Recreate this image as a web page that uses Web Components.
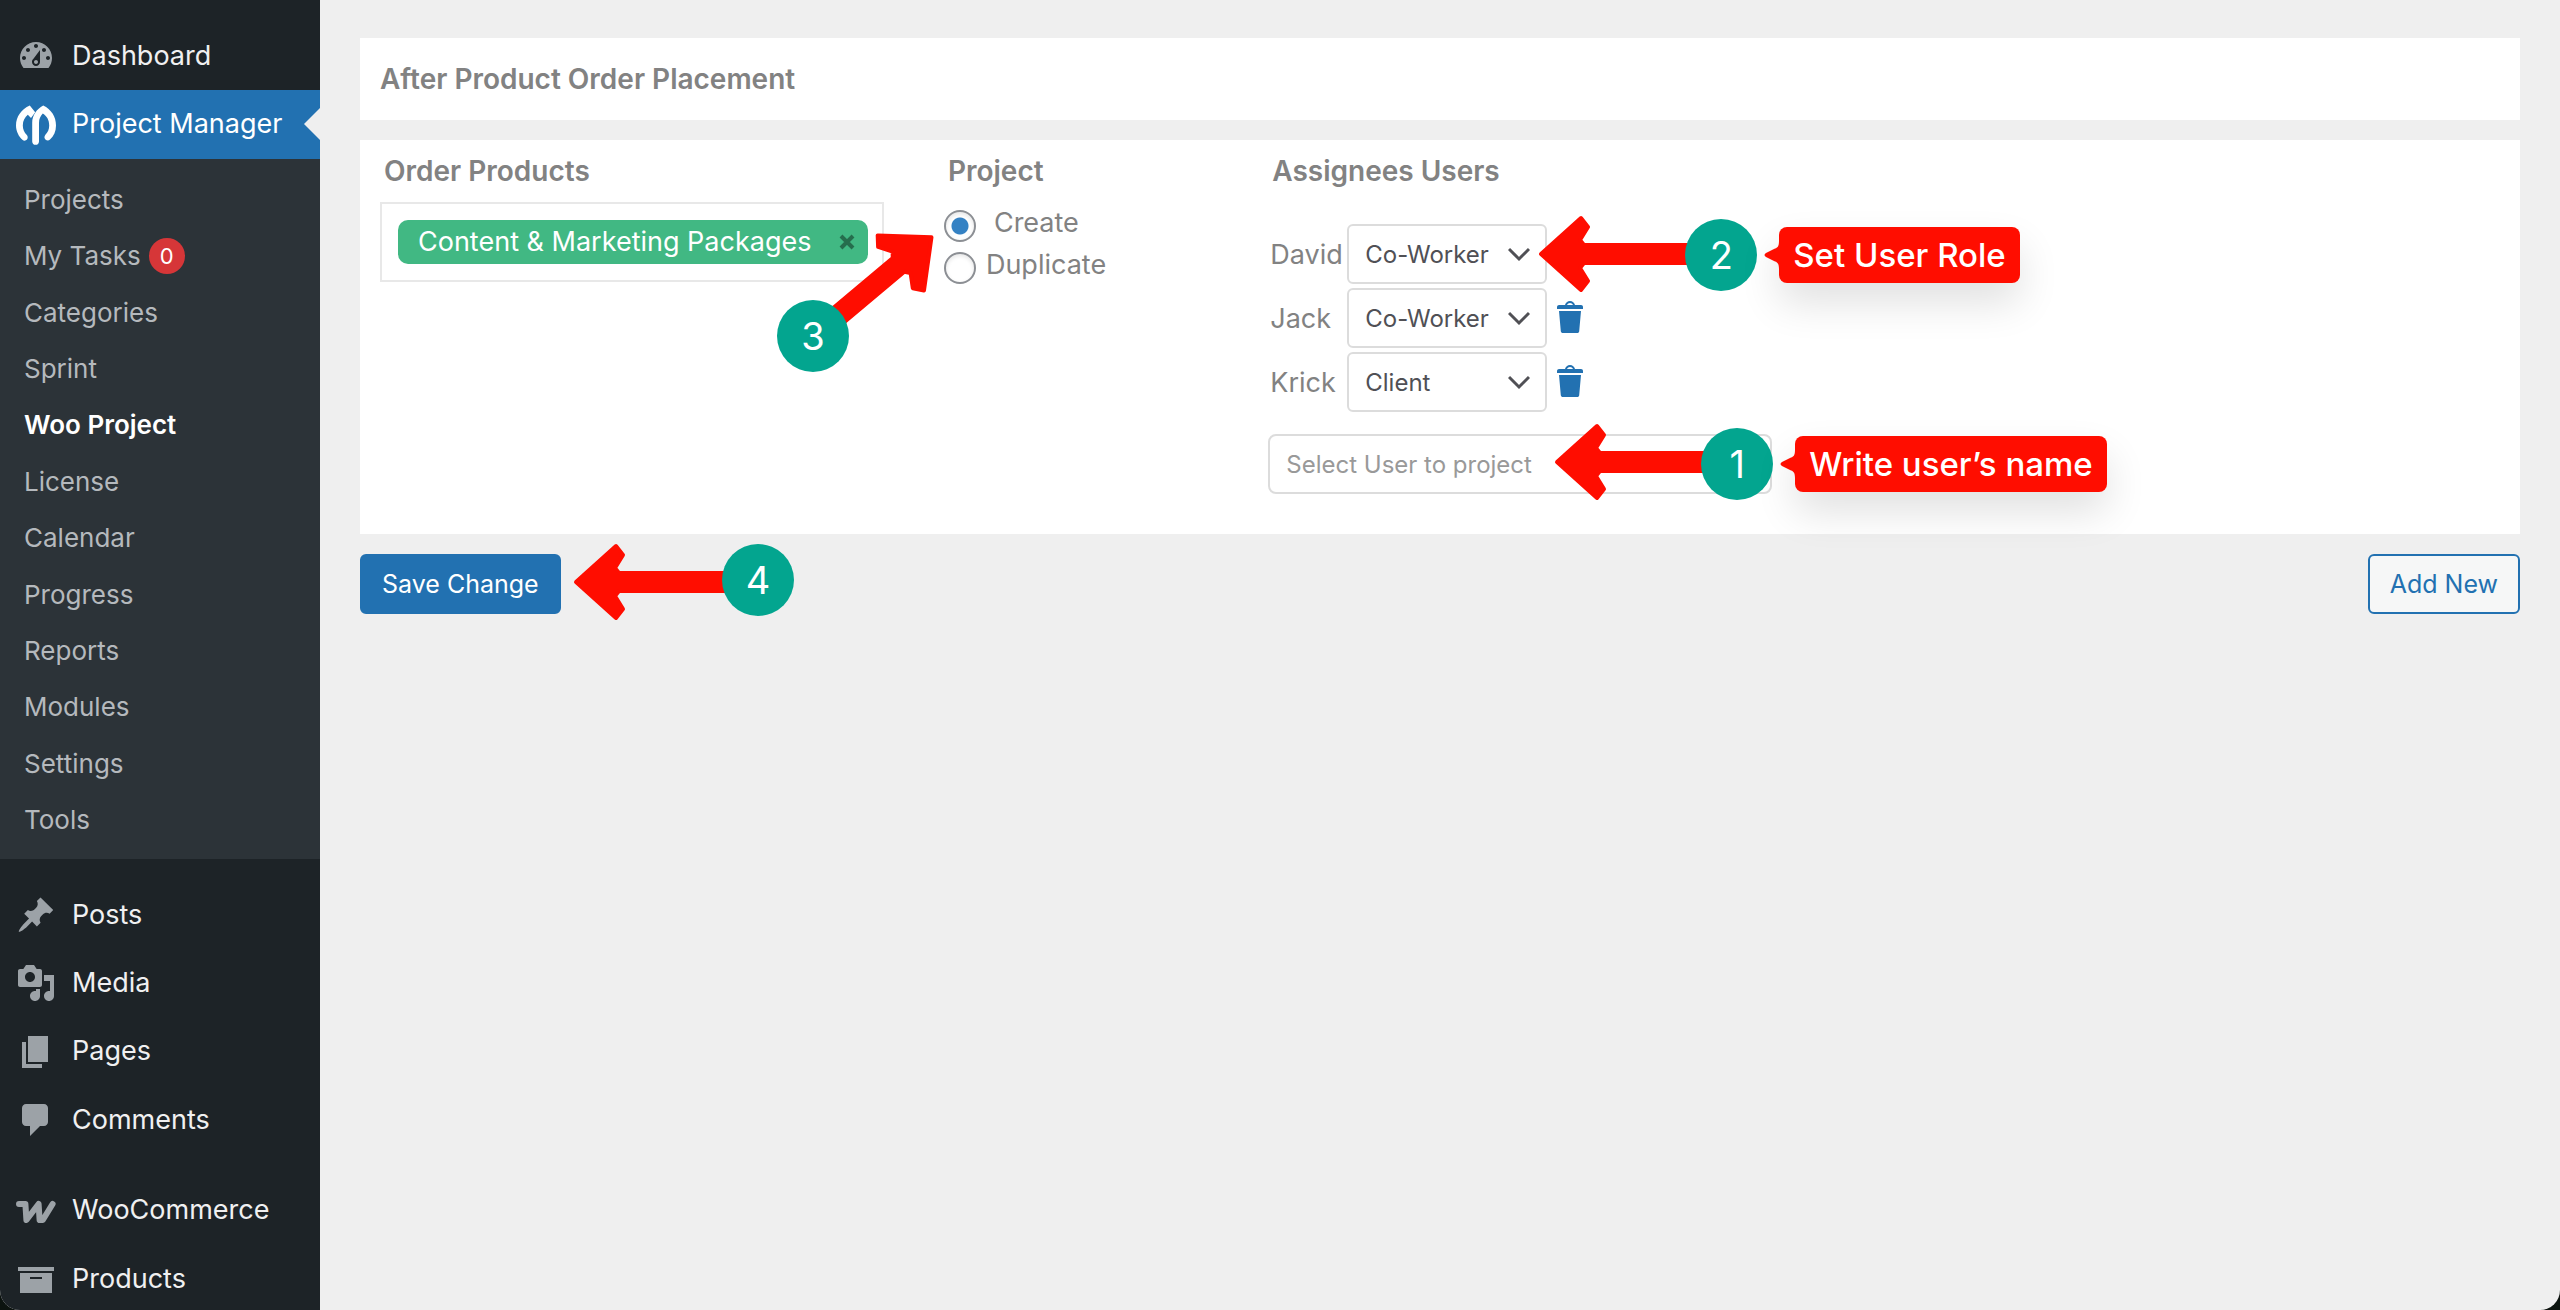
<!DOCTYPE html>
<html lang="en">
<head>
<meta charset="utf-8">
<meta name="viewport" content="width=device-width, initial-scale=1">
<title>Woo Project - Project Manager</title>
<style>
html {
    background: #0c130f;
}
body {
    margin: 0;
    font-family: Inter, "Liberation Sans", sans-serif;
    font-size: 27px;
}
</style>
</head>
<body>
<pm-app></pm-app>

<script>
// 20x20 icon shapes
const icons = {
  dashboard: `<path d="M3.76 16h12.48c1.1-1.37 1.76-3.11 1.76-5 0-4.42-3.58-8-8-8s-8 3.58-8 8c0 1.89.66 3.63 1.76 5zM10 4c.55 0 1 .45 1 1s-.45 1-1 1-1-.45-1-1 .45-1 1-1zM6 6c.55 0 1 .45 1 1s-.45 1-1 1-1-.45-1-1 .45-1 1-1zm8 0c.55 0 1 .45 1 1s-.45 1-1 1-1-.45-1-1 .45-1 1-1zm-5.37 5.55L12 7v6c0 1.1-.9 2-2 2s-2-.9-2-2c0-.57.24-1.08.63-1.45zM4 10c.55 0 1 .45 1 1s-.45 1-1 1-1-.45-1-1 .45-1 1-1zm12 0c.55 0 1 .45 1 1s-.45 1-1 1-1-.45-1-1 .45-1 1-1zm-5 3c0-.55-.45-1-1-1s-1 .45-1 1 .45 1 1 1 1-.45 1-1z"/>`,
  manager: `<path d="M6.9.3C2.6 2.2 0 6 0 10.2c0 2.9 1.4 5.5 3.2 7.2.7.7 1.7.6 2.3-.1.6-.8.4-1.7-.2-2.4-1.1-1.2-1.9-2.8-1.9-4.7 0-2.3 1.1-4.2 2.500-5.300L7.500 6.500 9.600 3.600z"/><path d="M13.600.3C10.300 2.100 8.100 5.200 8.100 9v9.200c0 1 .7 1.700 1.700 1.700s1.700-.7 1.700-1.700V9c0-2 .7-3.400 1.900-4.700 2 1.200 3.200 3.300 3.200 5.900 0 1.900-.7 3.400-1.900 4.700-.6.700-.7 1.700 0 2.300.7.700 1.600.700 2.300.1 1.900-1.800 3-4.200 3-7.100 0-4.300-2.400-8-6.400-9.900z"/>`,
  posts: `<path d="M10.440 3.020l1.820-1.820 6.360 6.350-1.830 1.820c-1.050-.68-2.480-.57-3.410.36l-.75.75c-.92.93-1.040 2.350-.35 3.410l-1.830 1.820-2.410-2.410-2.800 2.790c-.42.42-3.380 2.710-3.800 2.290s1.860-3.390 2.280-3.810l2.790-2.790L4.100 9.360l1.830-1.820c1.050.69 2.480.57 3.400-.36l.75-.75c.93-.92 1.050-2.350.36-3.410z"/>`,
  media: `<path d="M13 11V4c0-.55-.45-1-1-1h-1.670L9 1H5L3.670 3H2c-.55 0-1 .45-1 1v7c0 .55.45 1 1 1h10c.55 0 1-.45 1-1zM7 4.500c1.380 0 2.500 1.120 2.500 2.500S8.380 9.500 7 9.500 4.500 8.380 4.500 7 5.620 4.500 7 4.500zM14 6h5v10.500c0 1.380-1.120 2.500-2.500 2.500S14 17.880 14 16.500s1.120-2.500 2.500-2.500c.17 0 .34.02.5.05V9h-3V6zm-4 8.050V13h2v3.500c0 1.380-1.120 2.500-2.500 2.500S7 17.880 7 16.500 8.120 14 9.500 14c.17 0 .34.02.5.05z"/>`,
  pages: `<path d="M6 15V2h10v13H6zm-1 1h8v2H3V5h2v11z"/>`,
  comments: `<path d="M5 2h9c1.100 0 2 .9 2 2v7c0 1.100-.9 2-2 2h-2l-5 5v-5H5c-1.100 0-2-.9-2-2V4c0-1.100.9-2 2-2z"/>`,
  woo: `<path d="M1.500 6.500H4.700L5.200 14.500 11.300 6.500 11.800 14.500H13.400L18.300 6.500" fill="none" stroke="currentColor" stroke-width="3" stroke-linejoin="round" stroke-linecap="round"/>`,
  products: `<path d="M19 4v2H1V4h18zM2 7h16v10H2V7zm11 3V9H7v1h6z"/>`,
  trash: `<path d="M12 4h3c.6 0 1 .4 1 1v1H3V5c0-.6.5-1 1-1h3c.2-1.100 1.300-2 2.500-2s2.300.9 2.500 2zM8 4h3c-.2-.6-.9-1-1.500-1S8.200 3.400 8 4zM4 7h11l-.9 10.100c0 .5-.5.9-1 .9H5.900c-.5 0-.9-.4-1-.9L4 7z"/>`,
};

class PmElement extends HTMLElement {
  constructor() {
    super();
    this.attachShadow({ mode: "open" });
    const componentTemplate = document.createElement("template");
    componentTemplate.innerHTML = this.render();
    this.shadowRoot.appendChild(componentTemplate.content.cloneNode(true));
  }
}

class PmIcon extends HTMLElement {
  constructor() {
    super();
    this.attachShadow({ mode: "open" });
  }

  connectedCallback() {
    this.shadowRoot.innerHTML = `
      <style>
      :host{ display:block; width:40px; height:40px; }
      svg{ display:block; width:100%; height:100%; fill:currentColor; }
      </style>
      <svg viewBox="0 0 20 20" aria-hidden="true">${icons[this.getAttribute("name")]}</svg>
    `;
  }
}

class PmMenuItem extends HTMLElement {
  constructor() {
    super();
    this.attachShadow({ mode: "open" });
  }

  connectedCallback() {
    this.shadowRoot.innerHTML = `
      <style>
      :host{ display:block; color:#f0f0f1; --icon:#9ca2a7; }
      :host([current]){ background:#2271b1; color:#fff; --icon:#fff; }
      a{
          display:flex;
          align-items:center;
          position:relative;
          padding:16px 0;
          line-height:1.35;
          color:inherit;
          text-decoration:none;
      }
      .icon{
          width:72px;
          display:flex;
          justify-content:center;
          margin:-2px 0;
          color:var(--icon);
      }
      :host([current]) a::after{
          content:"";
          position:absolute;
          right:0;
          top:18px;
          border:16px solid transparent;
          border-left-width:0;
          border-right-color:#efefef;
      }
      </style>
      <a href="#"><span class="icon"><pm-icon name="${this.getAttribute("icon")}"></pm-icon></span><slot></slot></a>
    `;
  }
}

class PmSubmenu extends HTMLElement {
  constructor() {
    super();
    this.attachShadow({ mode: "open" });
  }

  connectedCallback() {
    const links = [
      "Projects", "My Tasks", "Categories", "Sprint", "Woo Project", "License",
      "Calendar", "Progress", "Reports", "Modules", "Settings", "Tools",
    ];
    let linksHtml = "";
    for (const link of links) {
      const current = link === "Woo Project" ? ` class="current"` : "";
      const badge = link === "My Tasks" ? `<span class="badge">0</span>` : "";
      linksHtml += `<li><a href="#"${current}>${link}${badge}</a></li>`;
    }
    this.shadowRoot.innerHTML = `
      <style>
      :host{ display:block; background:#2c3338; }
      ul{ list-style:none; margin:0; padding:13px 0 10px; }
      a{
          display:flex;
          align-items:center;
          gap:8px;
          padding:10px 24px;
          font-size:26px;
          line-height:1.4;
          color:#b5b9bd;
          text-decoration:none;
      }
      .current{ color:#fff; font-weight:600; }
      .badge{
          width:36px;
          margin:-2px 0;
          border-radius:50%;
          background:#d63638;
          color:#fff;
          font-size:22px;
          line-height:36px;
          text-align:center;
      }
      </style>
      <ul>${linksHtml}</ul>
    `;
  }
}

class PmSidebar extends PmElement {
  render() {
    return `
      <style>
      :host{
          display:block;
          box-sizing:border-box;
          width:320px;
          height:100vh;
          padding-top:22px;
          overflow:hidden;
          background:#1d2327;
      }
      hr{ height:22px; margin:0; border:0; }
      </style>
      <nav>
        <pm-menu-item icon="dashboard">Dashboard</pm-menu-item>
        <pm-menu-item icon="manager" current>Project Manager</pm-menu-item>
        <pm-submenu></pm-submenu>
        <hr>
        <pm-menu-item icon="posts">Posts</pm-menu-item>
        <pm-menu-item icon="media">Media</pm-menu-item>
        <pm-menu-item icon="pages">Pages</pm-menu-item>
        <pm-menu-item icon="comments">Comments</pm-menu-item>
        <hr>
        <pm-menu-item icon="woo">WooCommerce</pm-menu-item>
        <pm-menu-item icon="products">Products</pm-menu-item>
      </nav>
    `;
  }
}

// red arrow from a numbered disc, the host sits on the tip of the arrow
class PmStep extends HTMLElement {
  constructor() {
    super();
    this.attachShadow({ mode: "open" });
  }

  connectedCallback() {
    const dx = parseInt(this.getAttribute("dx"));
    const dy = parseInt(this.getAttribute("dy"));
    const angle = this.getAttribute("angle") || 0;
    const length = Math.hypot(dx, dy);
    this.shadowRoot.innerHTML = `
      <style>
      :host{ display:block; position:absolute; z-index:1; width:0; height:0; }
      svg{ position:absolute; left:0; top:0; width:1px; height:1px; overflow:visible; }
      .end{
          position:absolute;
          left:${dx - 36}px;
          top:${dy - 36}px;
          display:flex;
          align-items:center;
          gap:22px;
          width:max-content;
      }
      .number{
          width:72px;
          border-radius:50%;
          background:#03a58f;
          color:#fff;
          font-size:38px;
          line-height:72px;
          text-align:center;
      }
      </style>
      <svg aria-hidden="true">
        <path transform="rotate(${angle})" fill="#ff0d00" stroke="#ff0d00" stroke-width="4" stroke-linejoin="round"
          d="M2 0L42-36 49-27 41-14 45-9H${length}V9H45L41 14 49 27 42 36z"/>
      </svg>
      <div class="end">
        <span class="number">${this.getAttribute("number")}</span>
        <slot></slot>
      </div>
    `;
  }
}

class PmTooltip extends PmElement {
  render() {
    return `
      <style>
      :host{
          display:block;
          position:relative;
          padding:0 14px;
          border-radius:8px;
          background:#ff0d00;
          box-shadow:0 20px 40px rgba(0,0,0,.12);
          color:#fff;
          font-size:33px;
          font-weight:500;
          line-height:56px;
      }
      svg{ position:absolute; right:100%; top:12px; fill:#ff0d00; }
      </style>
      <svg width="15" height="32" aria-hidden="true"><path d="M15 2C15 8 13 9 10 10L2 14Q-1 16 2 18L10 22C13 23 15 24 15 30z"/></svg>
      <slot></slot>
    `;
  }
}

class PmCard extends PmElement {
  render() {
    return `
      <style>
      :host{ display:block; padding:0 20px; background:#fff; color:#828282; }
      </style>
      <slot></slot>
    `;
  }
}

class PmProductSelect extends PmElement {
  render() {
    return `
      <style>
      :host{ display:flex; padding:16px 14px 16px 16px; border:2px solid #e8e8e8; }
      .tag{
          display:flex;
          align-items:center;
          justify-content:space-between;
          flex:1;
          padding:0 13px 0 20px;
          border-radius:10px;
          background:#41b883;
          color:#fff;
          line-height:44px;
          white-space:nowrap;
      }
      button{ display:flex; padding:0; border:0; background:none; }
      svg{ fill:none; stroke:#266d4d; stroke-width:4; }
      </style>
      <span class="tag">Content &amp; Marketing Packages
        <button type="button" aria-label="Remove"><svg width="16" height="16"><path d="M2 2L14 14M14 2L2 14"/></svg></button>
      </span>
    `;
  }
}

class PmProjectChoice extends PmElement {
  render() {
    return `
      <style>
      :host{ display:flex; flex-direction:column; gap:10px; padding-top:8px; }
      label{ display:flex; height:32px; gap:10px; line-height:26px; }
      label:first-of-type{ gap:18px; }
      input{
          appearance:none;
          width:32px;
          height:32px;
          margin:0;
          border:2px solid #8c8f94;
          border-radius:50%;
          background:#fff;
          box-shadow:inset 0 2px 4px rgba(0,0,0,.1);
      }
      input:checked{
          background:radial-gradient(circle, #3582c4 8px, transparent 9px);
      }
      </style>
      <label><input type="radio" name="project" checked>Create</label>
      <label><input type="radio" name="project">Duplicate</label>
    `;
  }
}

class PmUserRow extends HTMLElement {
  constructor() {
    super();
    this.attachShadow({ mode: "open" });
  }

  connectedCallback() {
    const name = this.getAttribute("name");
    const role = this.getAttribute("role-name");
    let optionsHtml = "";
    for (const option of ["Manager", "Co-Worker", "Client"]) {
      optionsHtml += `<option${option === role ? " selected" : ""}>${option}</option>`;
    }
    const removeHtml = `<button type="button" aria-label="Remove ${name}"><pm-icon name="trash"></pm-icon></button>`;
    this.shadowRoot.innerHTML = `
      <style>
      :host{ display:flex; align-items:center; position:relative; }
      label{ width:77px; padding-left:2px; white-space:nowrap; }
      .field{ position:relative; }
      select{
          appearance:none;
          display:block;
          width:200px;
          height:60px;
          padding:0 44px 0 16px;
          border:2px solid #dcdcdc;
          border-radius:6px;
          background:#fff;
          color:#505055;
          font-family:inherit;
          font-size:24px;
      }
      .field svg{ position:absolute; right:17px; top:22px; pointer-events:none; fill:none; stroke:#505055; stroke-width:3; }
      button{ padding:0 0 2px; margin-left:4px; border:0; background:none; color:#2271b1; }
      </style>
      <label for="role">${name}</label>
      <div class="field">
        <select id="role">${optionsHtml}</select>
        <svg width="22" height="16"><path d="M1 3L11 13 21 3"/></svg>
      </div>
      ${this.hasAttribute("removable") ? removeHtml : ""}
      <slot></slot>
    `;
  }
}

class PmAssignees extends PmElement {
  render() {
    return `
      <style>
      :host{ display:flex; flex-direction:column; gap:4px; padding:22px 0 40px; }
      .search{ position:relative; width:504px; margin-top:18px; }
      input{
          display:block;
          box-sizing:border-box;
          width:100%;
          height:60px;
          padding:0 16px;
          border:2px solid #dcdcdc;
          border-radius:8px;
          background:#fff;
          font-family:inherit;
          font-size:24px;
      }
      input::placeholder{ color:#999; }
      .role-step{ left:271px; top:30px; }
      .search-step{ left:287px; top:28px; }
      </style>
      <pm-user-row name="David" role-name="Co-Worker">
        <pm-step class="role-step" number="2" dx="182" dy="1"><pm-tooltip>Set User Role</pm-tooltip></pm-step>
      </pm-user-row>
      <pm-user-row name="Jack" role-name="Co-Worker" removable></pm-user-row>
      <pm-user-row name="Krick" role-name="Client" removable></pm-user-row>
      <div class="search">
        <input type="text" aria-label="Select User to project" placeholder="Select User to project">
        <pm-step class="search-step" number="1" dx="182" dy="2"><pm-tooltip>Write user’s name</pm-tooltip></pm-step>
      </div>
    `;
  }
}

class PmOrderTable extends PmElement {
  render() {
    return `
      <style>
      :host{ display:block; }
      table{ width:100%; border-spacing:0; table-layout:fixed; }
      th{ box-sizing:border-box; padding:12px 4px; font-size:28px; line-height:38px; font-weight:600; text-align:left; }
      td{ padding:0; vertical-align:top; }
      .products{ width:26.6%; }
      .project{ width:15.3%; }
      pm-product-select{ margin-right:60px; }
      .choice{ position:relative; }
      .choice pm-step{ left:-11px; top:34px; }
      </style>
      <table>
        <thead>
          <tr><th class="products">Order Products</th><th class="project">Project</th><th>Assignees Users</th></tr>
        </thead>
        <tbody>
          <tr>
            <td><pm-product-select></pm-product-select></td>
            <td>
              <div class="choice">
                <pm-project-choice></pm-project-choice>
                <pm-step number="3" dx="-120" dy="100" angle="140"></pm-step>
              </div>
            </td>
            <td><pm-assignees></pm-assignees></td>
          </tr>
        </tbody>
      </table>
    `;
  }
}

class PmButton extends PmElement {
  render() {
    return `
      <style>
      :host{ display:block; }
      button{
          display:block;
          height:60px;
          padding:0 20px;
          border:2px solid #2271b1;
          border-radius:6px;
          background:#f6f7f7;
          color:#2271b1;
          font-family:inherit;
          font-size:25px;
      }
      :host([primary]) button{ background:#2271b1; color:#fff; }
      </style>
      <button type="button"><slot></slot></button>
    `;
  }
}

class PmApp extends PmElement {
  render() {
    return `
      <style>
      :host{
          display:flex;
          min-height:100vh;
          border-radius:0 0 20px 20px;
          overflow:hidden;
          background:#efefef;
      }
      pm-sidebar{ flex:none; }
      main{ flex:1; display:flex; flex-direction:column; gap:20px; padding:38px 40px; }
      h2{ margin:0; font-size:28px; font-weight:600; line-height:82px; }
      .actions{ display:flex; justify-content:space-between; }
      .save{ position:relative; }
      .save pm-step{ left:214px; top:28px; }
      </style>
      <pm-sidebar></pm-sidebar>
      <main>
        <pm-card><h2>After Product Order Placement</h2></pm-card>
        <pm-card><pm-order-table></pm-order-table></pm-card>
        <div class="actions">
          <div class="save">
            <pm-button primary>Save Change</pm-button>
            <pm-step number="4" dx="184" dy="-2"></pm-step>
          </div>
          <pm-button>Add New</pm-button>
        </div>
      </main>
    `;
  }
}

customElements.define("pm-icon", PmIcon);
customElements.define("pm-menu-item", PmMenuItem);
customElements.define("pm-submenu", PmSubmenu);
customElements.define("pm-sidebar", PmSidebar);
customElements.define("pm-step", PmStep);
customElements.define("pm-tooltip", PmTooltip);
customElements.define("pm-card", PmCard);
customElements.define("pm-product-select", PmProductSelect);
customElements.define("pm-project-choice", PmProjectChoice);
customElements.define("pm-user-row", PmUserRow);
customElements.define("pm-assignees", PmAssignees);
customElements.define("pm-order-table", PmOrderTable);
customElements.define("pm-button", PmButton);
customElements.define("pm-app", PmApp);
</script>
</body>
</html>
